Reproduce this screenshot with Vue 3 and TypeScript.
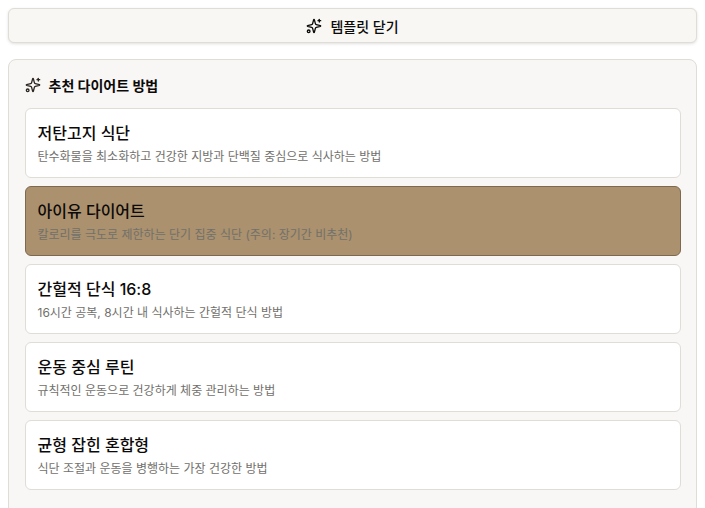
<script setup lang="ts">
interface Plan { title: string; desc: string; active?: boolean }
const plans: Plan[] = [
  { title: '저탄고지 식단', desc: '탄수화물을 최소화하고 건강한 지방과 단백질 중심으로 식사하는 방법' },
  { title: '아이유 다이어트', desc: '칼로리를 극도로 제한하는 단기 집중 식단 (주의: 장기간 비추천)', active: true },
  { title: '간헐적 단식 16:8', desc: '16시간 공복, 8시간 내 식사하는 간헐적 단식 방법' },
  { title: '운동 중심 루틴', desc: '규칙적인 운동으로 건강하게 체중 관리하는 방법' },
  { title: '균형 잡힌 혼합형', desc: '식단 조절과 운동을 병행하는 가장 건강한 방법' },
]
</script>

<template>
  <main class="page">
    <button class="toggle" type="button">
      <svg class="icon" viewBox="0 0 24 24" fill="none" stroke="currentColor" stroke-width="2" stroke-linecap="round" stroke-linejoin="round">
        <path d="M9.937 15.5A2 2 0 0 0 8.5 14.063l-6.135-1.582a.5.5 0 0 1 0-.962L8.5 9.936A2 2 0 0 0 9.937 8.5l1.582-6.135a.5.5 0 0 1 .963 0L14.063 8.5A2 2 0 0 0 15.5 9.937l6.135 1.581a.5.5 0 0 1 0 .964L15.5 14.063a2 2 0 0 0-1.437 1.437l-1.582 6.135a.5.5 0 0 1-.963 0z" />
        <path d="M20 2v4" /><path d="M22 4h-4" /><circle cx="4" cy="20" r="2" />
      </svg>
      <span>템플릿 닫기</span>
    </button>
    <section class="panel">
      <h2 class="heading">
        <svg class="icon muted" viewBox="0 0 24 24" fill="none" stroke="currentColor" stroke-width="2" stroke-linecap="round" stroke-linejoin="round">
          <path d="M9.937 15.5A2 2 0 0 0 8.5 14.063l-6.135-1.582a.5.5 0 0 1 0-.962L8.5 9.936A2 2 0 0 0 9.937 8.5l1.582-6.135a.5.5 0 0 1 .963 0L14.063 8.5A2 2 0 0 0 15.5 9.937l6.135 1.581a.5.5 0 0 1 0 .964L15.5 14.063a2 2 0 0 0-1.437 1.437l-1.582 6.135a.5.5 0 0 1-.963 0z" />
          <path d="M20 2v4" /><path d="M22 4h-4" /><circle cx="4" cy="20" r="2" />
        </svg>
        <span>추천 다이어트 방법</span>
      </h2>
      <div class="list">
        <button v-for="p in plans" :key="p.title" type="button" class="card" :class="{ active: p.active }">
          <span class="title">{{ p.title }}</span>
          <span class="desc">{{ p.desc }}</span>
        </button>
      </div>
    </section>
  </main>
</template>

<style scoped>
.page {
  display: flex;
  flex-direction: column;
  gap: 16px;
  padding: 8px;
  box-sizing: border-box;
  font-family: Inter, "Noto Sans CJK KR", sans-serif;
  color: #0c0a09;
}
.toggle {
  display: flex;
  align-items: center;
  justify-content: center;
  gap: 8px;
  height: 35px;
  background: #f9f7f4;
  border: 1px solid #e0dcd6;
  border-radius: 6px;
  box-shadow: 0 1px 3px rgba(0, 0, 0, 0.12);
  font: inherit;
  font-size: 14px;
  font-weight: 500;
  color: #0c0a09;
  padding: 0;
}
.icon { width: 16px; height: 16px; flex: none; }
.muted { color: #2c2620; }
.panel {
  background: #f8f7f5;
  border: 1px solid #e0dcd6;
  border-radius: 8px;
  padding: 16px 15px 24px 15.5px;
}
.heading {
  display: flex;
  align-items: center;
  gap: 8px;
  margin: 0 0 14px;
  height: 18px;
  font-size: 14px;
  font-weight: 700;
  color: #0c0a09;
}
.list { display: flex; flex-direction: column; gap: 8px; }
.card {
  display: flex;
  flex-direction: column;
  align-items: flex-start;
  gap: 4px;
  height: 70px;
  box-sizing: border-box;
  padding: 12px;
  background: #fff;
  border: 1px solid #e0dcd6;
  border-radius: 6px;
  font: inherit;
  text-align: left;
}
.card.active { background: #ab916d; border-color: #7d6850; }
.title { font-size: 16px; font-weight: 500; line-height: 24px; color: #0c0a09; }
.desc { font-size: 12px; line-height: 16px; color: #71706c; }
</style>
